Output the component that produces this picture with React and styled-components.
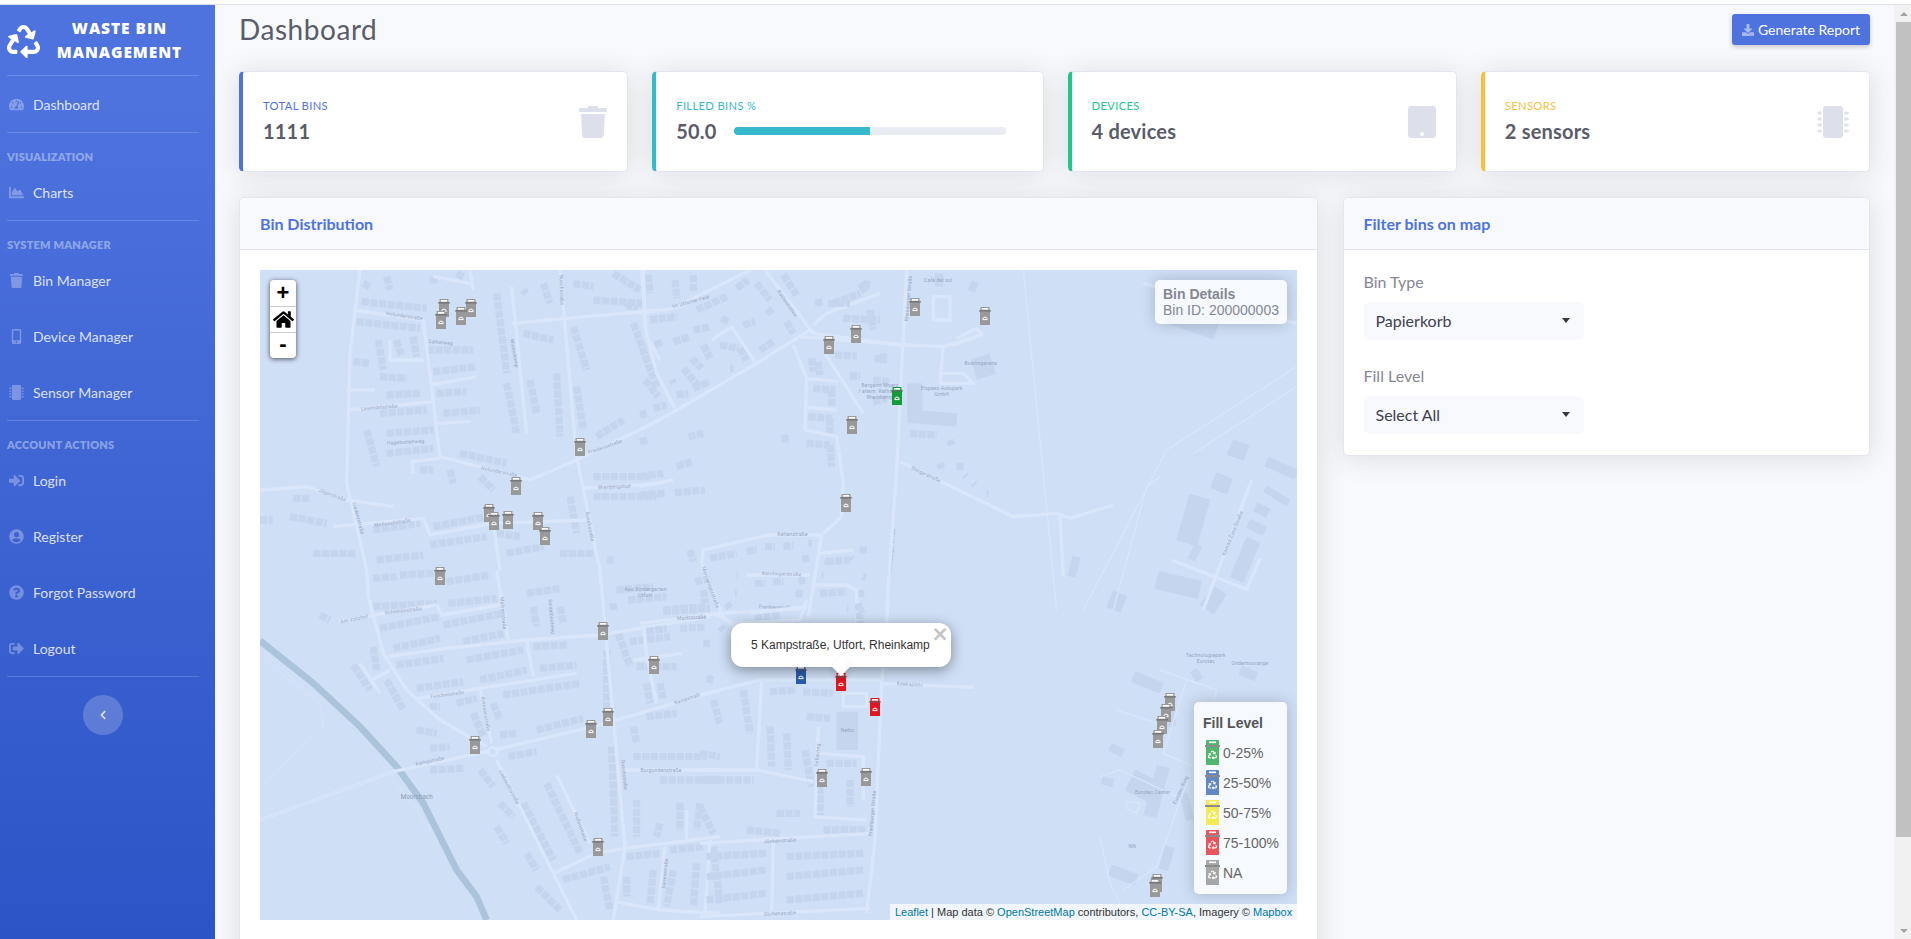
import React from 'react';
import styled, { createGlobalStyle } from 'styled-components';
import {
  FaRecycle, FaTachometerAlt, FaChartArea, FaTrash, FaMobileAlt, FaMicrochip, FaSignInAlt,
  FaUserCircle, FaQuestionCircle, FaSignOutAlt, FaChevronLeft, FaDownload, FaTablet, FaHome,
} from 'react-icons/fa';

const UI = '"Lato", "Open Sans", sans-serif';
const ARIAL = '"Liberation Sans", Arial, sans-serif';

const Global = createGlobalStyle`
  html, body { margin: 0; padding: 0; height: 100%; overflow: hidden; background: #fff; }
  * { box-sizing: border-box; }
  body { font-family: ${UI}; }
`;

const Page = styled.div`
  width: 1911px; height: 939px; display: flex; flex-direction: column; overflow: hidden; background: #fff;
`;
const TopStrip = styled.div`height: 5px; flex: none; background: #fff; border-bottom: 1px solid #dfe1e8;`;
const Body = styled.div`flex: 1; display: flex; min-height: 0;`;

const Sidebar = styled.aside`
  width: 215px; flex: none; height: 100%; display: flex; flex-direction: column;
  background: linear-gradient(180deg, #4e73df 10%, #224abe 130%);
`;
const Brand = styled.div`
  height: 70px; flex: none; display: flex; align-items: center; padding: 0 0 0 7px; color: #fff;
  svg { width: 33px; height: 33px; flex: none; margin-top: 2px; }
`;
const BrandText = styled.div`
  flex: 1; text-align: center; font-family: "Open Sans", sans-serif; font-weight: 800; font-size: 15.5px;
  line-height: 24px; letter-spacing: 0.95px; text-transform: uppercase; padding-right: 16px;
`;
const Divider = styled.hr`
  height: 1px; flex: none; margin: 0 16px 0 7px; border: 0; background: rgba(255,255,255,.17);
`;
const Heading = styled.div`
  height: 31px; flex: none; padding: 16px 0 0 7px; font-size: 11px; line-height: 15px; font-weight: 800; letter-spacing: .2px;
  text-transform: uppercase; color: rgba(255,255,255,.4); font-family: ${UI};
`;
const NavItem = styled.a`
  height: ${p => p.$h || 56}px; flex: none; display: flex; align-items: center; padding-left: 8px; color: rgba(255,255,255,.82);
  font-size: 14px;
`;
const NavIcon = styled.span`
  width: 25px; flex: none; display: flex; justify-content: center; padding-right: 9px; color: rgba(255,255,255,.3);
  svg { width: 15px; height: 15px; }
`;
const ToggleWrap = styled.div`display: flex; justify-content: center; padding: 18px 9px 0 0;`;
const Toggle = styled.button`
  width: 40px; height: 40px; border-radius: 50%; border: 0; background: rgba(255,255,255,.2); color: rgba(255,255,255,.8);
  display: flex; align-items: center; justify-content: center; padding: 0;
  svg { width: 10px; height: 10px; }
`;

const Main = styled.main`
  flex: 1; min-width: 0; background: #f8f9fc; padding: 9px 24px 0; overflow: hidden;
`;
const HeaderRow = styled.div`
  display: flex; justify-content: space-between; align-items: flex-start; height: 31px; margin-bottom: 26px;
`;
const Title = styled.h1`
  margin: 0; font-size: 28px; line-height: 31px; font-weight: 400; color: #5a5c69; font-family: ${UI}; letter-spacing: .55px;
`;
const ReportButton = styled.button`
  width: 138px; height: 31px; border: 0; border-radius: 3px; background: #4e73df; color: #fff; font-family: ${UI}; font-size: 14px;
  display: flex; align-items: center; justify-content: center; gap: 4px; padding: 0; box-shadow: 0 2px 4px rgba(58,59,69,.25);
  svg { width: 12px; height: 12px; color: rgba(255,255,255,.5); }
`;
const KpiRow = styled.section`
  display: grid; grid-template-columns: repeat(4, 1fr); gap: 24px; margin-bottom: 25px;
`;
const Kpi = styled.article`
  height: 101px; display: flex; align-items: center; justify-content: space-between; background: #fff; border-radius: 5px;
  border: 1px solid #e3e6f0; border-left: 4px solid ${p => p.$accent};
  box-shadow: 0 2px 28px rgba(58,59,69,.15); padding: 0 20px 0 20px;
`;
const KpiBody = styled.div`flex: 1; min-width: 0; margin-top: -2px;`;
const KpiLabel = styled.div`
  font-size: 11.2px; line-height: 14px; font-weight: 400; letter-spacing: .35px; text-transform: uppercase; color: ${p => p.$accent}; margin-bottom: 6px;
`;
const KpiValue = styled.div`
  font-size: 20px; line-height: 24px; font-weight: 700; color: #5a5c69; flex: none; letter-spacing: .2px;
`;
const KpiProgressRow = styled.div`display: flex; align-items: center; gap: 17px; padding-right: 17px;`;
const Progress = styled.div`
  flex: none; width: 272px; height: 8px; border-radius: 4px; background: #eaecf4; overflow: hidden;
`;
const ProgressFill = styled.div`width: ${p => p.$pct}%; height: 100%; background: #36b9cc;`;
const KpiIcon = styled.span`
  display: flex; color: #dddfeb; flex: none;
  svg { height: 32px; width: ${p => p.$w || 28}px; }
`;

const Columns = styled.section`
  display: grid; grid-template-columns: 1078.5px 527.5px; gap: 25px; align-items: start;
`;
const Panel = styled.article`
  background: #fff; border: 1px solid #e3e6f0; border-radius: 5px; box-shadow: 0 2px 28px rgba(58,59,69,.15);
  overflow: hidden; min-height: ${p => p.$min || 0}px;
`;
const PanelHeader = styled.header`
  height: 52px; background: #f8f9fc; border-bottom: 1px solid #e3e6f0; display: flex; align-items: center; padding: 0 20px 1px;
  font-size: 16px; font-weight: 700; color: #4e73df;
`;
const MapBody = styled.div`padding: 20px;`;
const FilterBody = styled.div`padding: 20px 20px 21px; display: flex; flex-direction: column; gap: 24px;`;
const Field = styled.label`display: flex; flex-direction: column; gap: 8px; align-items: flex-start;`;
const FieldLabel = styled.span`font-size: 16px; line-height: 24px; color: #858796;`;
const SelectWrap = styled.span`
  position: relative; width: 220px; height: 38px; display: block;
  &::after { content: ''; position: absolute; right: 14px; top: 16px; border-left: 4.5px solid transparent; border-right: 4.5px solid transparent; border-top: 5px solid #343a40; }
`;
const Select = styled.select`
  appearance: none; width: 100%; height: 100%; border: 0; border-radius: 6px; background: #f8f9fc; color: #3f4150;
  font-family: ${UI}; font-size: 16px; padding: 0 12px 2px; outline: 0;
`;

const MapFrame = styled.div`
  position: relative; width: 1037px; height: 650px; overflow: hidden; background: #cfdff6; font-family: ${ARIAL};
`;
const MapCanvas = styled.svg`display: block; width: 1037px; height: 650px;`;
const TileGroup = styled.g`filter: blur(.35px);`;
const ZoomBox = styled.div`
  position: absolute; left: 10px; top: 10px; width: 26px; background: #fff; border-radius: 4px; box-shadow: 0 1px 5px rgba(0,0,0,.65);
  display: flex; flex-direction: column;
`;
const ZoomButton = styled.a`
  height: 26px; display: flex; align-items: center; justify-content: center; color: #000; font: bold 22px "Liberation Sans", sans-serif;
  padding-bottom: ${p => p.$lift || 0}px;
  & + & { border-top: 1px solid #ccc; }
  svg { width: 21px; height: 21px; }
`;
const InfoBox = styled.div`
  position: absolute; right: 10px; top: 10px; width: 132px; height: 44px; padding: 6px 8px; background: rgba(255,255,255,.8);
  border-radius: 5px; box-shadow: 0 0 15px rgba(0,0,0,.2); color: #858796; font-size: 14px; line-height: 16px; white-space: nowrap;
`;
const InfoTitle = styled.div`font-weight: 700;`;
const Legend = styled.div`
  position: absolute; right: 10px; top: 432px; width: 93px; height: 192px; padding: 12px 0 0 11px; background: rgba(255,255,255,.8);
  border-radius: 5px; box-shadow: 0 0 15px rgba(0,0,0,.2); color: #555; font-size: 14px;
`;
const LegendTitle = styled.div`font-weight: 700; line-height: 18px; margin: 0 0 5.5px -2px;`;
const LegendRow = styled.div`height: 30px; display: flex; align-items: center; gap: 3px; white-space: nowrap; color: #666;`;
const Attribution = styled.div`
  position: absolute; right: 0; bottom: 0; height: 16px; width: 407px; padding: 0 5px; background: rgba(255,255,255,.7);
  color: #333; font-size: 11px; line-height: 16px; text-align: right; white-space: nowrap;
  a { color: #0078a8; }
`;
const Popup = styled.div`
  position: absolute; left: 471px; top: 353px; width: 220px; height: 44px; background: #fff; border-radius: 12px;
  box-shadow: 0 3px 14px rgba(0,0,0,.4); color: #333; font-size: 12px; line-height: 44px; padding-left: 20px; white-space: nowrap;
  &::after { content: ''; position: absolute; left: 103px; top: 36px; width: 14px; height: 14px; background: #fff; transform: rotate(45deg); box-shadow: 3px 3px 6px rgba(0,0,0,.12); }
`;
const PopupClose = styled.span`
  position: absolute; right: 2px; top: 4px; width: 18px; height: 14px; font: bold 21px/14px "DejaVu Sans", sans-serif; color: #c3c3c3; text-align: center;
`;

const Scrollbar = styled.div`
  width: 17px; flex: none; background: #f1f1f1; position: relative; display: flex; flex-direction: column; align-items: flex-end;
`;
const ScrollArrow = styled.div`
  height: 17px; width: 15px; flex: none; display: flex; align-items: center; justify-content: center;
  &::before { content: ''; border-left: 4px solid transparent; border-right: 4px solid transparent; ${p => p.$down ? 'border-top' : 'border-bottom'}: 4px solid #a3a3a3; }
`;
const ScrollThumb = styled.div`width: 15px; height: 815px; flex: none; background: #c1c1c1;`;
const ScrollGap = styled.div`flex: 1;`;

/* ---- map data: every layer is traced in the coordinates of a 3x crop ---- */
const layers = [
  { ox: 260, oy: 270,
    rows: [[305,95,500,115],[290,155,480,175],[280,275,330,280],[355,210,370,300],[460,200,470,260],[410,210,425,260],[360,320,440,325],[500,240,640,240],[520,305,650,290],[530,370,620,365],[380,375,480,370],[550,430,660,420],[360,430,500,420],[320,480,350,590],[380,490,520,480],[380,550,520,535],[600,550,740,580],[480,600,520,600],[570,600,580,640],[660,620,700,660],[710,70,740,310],[740,340,770,490],[790,190,880,210],[810,330,830,430],[890,310,900,500],[940,170,980,300],[950,350,970,480],[1000,90,1150,100],[1060,10,1140,60],[1120,160,1190,350],[1010,500,1090,450],[1000,620,1170,620],[1000,680,1190,680],[520,770,680,740],[340,780,480,760],[510,825,680,800],[350,870,490,855],[160,850,290,850],[100,685,150,685],[0,750,40,750],[90,740,200,760],[710,790,780,800],[740,850,850,830],[900,850,1000,850],[930,680,950,790],[1040,870,1060,870],[310,40,330,50],[380,20,390,60],[520,20,520,40],[590,10,610,20],[850,40,870,100],[790,60,800,70],[940,40,1000,50],[1100,100,1130,120]],
    roads: ['M300 0L270 250L260 640L320 900','M280 120L490 150','M490 150L540 560L810 630L950 570L1200 450','M900 0L950 560L1020 900','M755 160L1200 120','M755 50L800 490','M265 420L520 395','M530 460L630 455','M515 345L650 320','M260 360L345 360','M390 210L390 270L490 270','M460 610L455 575L540 565','M0 660L140 650L260 690L400 710','M220 770L490 745L510 795L700 760L980 750','M975 655L1200 640','M630 0L640 60','M520 20L630 40','M700 760L720 900','M1145 0L1160 200L1200 270'],
    labels: [['Holunderstraße',433,138,8],['Salbeiweg',542,217,5],['Lavendelstraße',358,412,-5],['Hagebuttenweg',437,516,-3],['Jägerstraße',217,675,20],['Liedentstraße',295,745,75],['Melissenstraße',398,758,-8],['Holunderstraße',718,605,12],['Friedensstraße',1035,530,-20],['Wienbergshof',1063,650,-2],['Buschstraße',905,60,88],['Buschstraße',990,770,80],['Wieleskamp',763,250,80]] },
  { ox: 260, oy: 570,
    rows: [[340,25,410,20],[420,15,520,10],[560,35,690,15],[340,110,530,100],[565,100,710,85],[360,175,540,140],[550,165,730,130],[400,235,540,205],[610,215,730,190],[410,285,550,265],[620,270,790,240],[470,355,610,335],[660,330,800,300],[730,375,960,340],[590,400,650,385],[510,410,540,410],[640,430,670,500],[700,400,720,450],[720,495,770,490],[830,480,970,445],[745,560,830,545],[510,600,610,595],[790,700,880,870],[860,640,960,850],[800,850,830,900],[820,230,920,225],[840,295,950,285],[800,70,900,55],[820,110,830,170],[900,110,910,160],[1060,100,1060,120],[1040,240,1040,420],[1055,530,1065,800],[1075,190,1110,290],[1110,215,1230,200],[1130,290,1250,290],[1160,340,1170,400],[1200,340,1210,385],[1120,470,1130,520],[1160,440,1250,430],[1120,560,1340,560],[1200,630,1380,630],[1260,700,1260,780],[1320,700,1310,780],[1200,760,1190,800],[1130,690,1130,800],[1100,860,1200,850],[1230,840,1330,830],[1100,920,1100,980],[1180,900,1170,1000],[1240,900,1220,1010],[1310,880,1300,1010],[1360,830,1380,1000],[910,930,1050,890],[1030,920,1050,1020],[830,950,900,1020],[1210,120,1340,110],[1070,60,1180,50],[1105,90,1220,80],[180,135,210,150],[340,230,350,300],[280,285,330,360],[380,330,430,420],[470,480,530,490],[510,535,570,530],[660,600,700,650],[710,770,740,820],[720,700,760,740]],
    roads: ['M320 0L325 80L370 250L440 360L540 450L680 530','M240 155L370 130L530 105','M530 105L545 135L720 105','M385 260L560 235L800 210L1020 195L1350 140','M800 210L820 320','M470 385L660 355L950 310','M660 355L695 520','M0 750L400 605L680 545L1000 470L1380 360','M710 570L780 710L950 1050','M1020 0L1095 830L1060 1050','M1095 600L1380 600','M880 910L1010 850L1095 835L1380 800','M1065 995L1200 1020L1380 1030','M1350 810L1335 1030','M1215 830L1195 1020','M890 615L990 820','M1150 165L1160 260L1190 400','M1120 270L1265 250','M710 0L745 210','M300 280L360 370','M335 330L390 300','M1280 720L1280 810'],
    labels: [['Am Votzhof',283,147,-12],['Schlehenstraße',430,122,-7],['Malvenstraße',730,130,85],['Seidelbastweg',875,140,85],['Fenchelstraße',562,373,-8],['Kressenstraße',677,432,80],['Kampstraße',510,573,-12],['Kampstraße',1285,385,-18],['Liebrechtstraße',748,652,62],['Wellenstraße',962,770,70],['Buschstraße',1093,615,85],['Burgundenstraße',1203,600,0],['Marktstraße',1295,143,-4],['Skirenstraße',1215,910,-85],['Awo Kindergarten',1156,58,0],['Utfort',1156,75,0]] },
  { ox: 640, oy: 270,
    rows: [[25,15,30,70],[105,30,110,85],[160,15,160,65],[30,150,110,140],[45,225,70,215],[100,215,150,200],[160,180,210,170],[190,225,210,265],[155,265,185,295],[240,225,295,235],[245,145,265,155],[170,120,260,80],[290,55,325,30],[350,40,390,90],[380,130,400,115],[440,155,460,190],[310,165,345,155],[360,240,400,215],[300,235,320,270],[270,295,280,295],[130,295,180,355],[110,375,145,370],[160,355,210,335],[40,415,80,405],[0,435,20,430],[95,330,100,340],[15,330,55,380],[145,500,190,490],[0,515,25,510],[110,590,155,575],[0,620,70,610],[0,675,75,670],[105,668,195,660],[435,495,435,520],[520,355,585,360],[575,360,575,410],[505,440,575,445],[570,445,570,490],[500,520,570,525],[570,525,575,590],[515,265,520,305],[535,275,540,315],[585,255,650,258],[705,265,735,268],[630,318,660,318],[700,330,750,335],[700,395,740,385],[610,145,720,150],[690,120,700,180],[580,100,660,70],[430,15,470,75],[670,40,695,45],[525,100,550,95],[210,865,290,850],[320,845,350,840],[375,830,405,830],[430,828,460,828],[505,820,515,820],[495,855,500,880],[150,840,160,875],[165,935,215,925],[290,915,295,915],[345,940,375,940],[400,935,430,935],[475,935,495,930],[545,915,550,915],[285,970,290,970],[480,960,475,985],[190,960,195,1000],[70,1025,210,1015],[260,1000,270,1015],[20,1085,80,1075],[120,1075,195,1072],[345,1045,420,1035],[560,875,630,870],[670,830,670,850],[670,920,675,920],[540,970,620,965],[660,960,665,985],[620,1015,625,1015],[660,1015,665,1030]],
    roads: ['M0 130L100 115L330 0','M10 0L15 170L50 310L105 415','M0 480L110 420L350 280L510 180','M375 0L520 190L780 225','M520 165L560 130L720 70','M215 210L275 170L345 275','M460 225L500 325L495 480L590 500L610 640L605 740L550 790','M500 325L595 335','M500 412L590 420','M555 250L670 430','M185 880L190 840L385 795L545 795L505 1040','M320 915L510 915','M540 850L640 840','M515 945L620 945L650 960L650 1060','M0 1060L240 1030L280 1070','M240 1030L500 1015','M0 650L100 630','M185 880L245 1030'],
    labels: [['Im Utforter Feld',152,95,-15],['Rathausallee',442,100,55],['Keltenstraße',458,792,0],['Karolingerstraße',425,912,2],['Merowingerstraße',212,952,70],['Frankenstraße',408,1012,2],['Marktstraße',155,1042,-4],['Rheinberger Straße',755,843,-85]] },
  { ox: 800, oy: 270,
    rows: [[200,45,180,60,30],[85,100,150,100],[240,265,240,265,30],[345,340,345,460,45],[345,440,470,450,40],[330,490,410,495],[450,510,455,525],[420,580,425,595],[470,590,470,590],[495,615,500,620],[520,640,525,645],[560,670,565,670],[75,870,85,875],[115,875,120,875],[150,865,155,870],[190,840,190,850],[190,920,195,925],[405,30,430,30,40],[510,45,530,55,30],[540,260,560,320,60],[1105,130,1250,180,60],[1290,530,1340,550,50],[1240,630,1290,650,50],[1400,575,1490,615,30],[1200,680,1160,820,65],[1395,655,1465,700,22],[1365,710,1405,730,30],[1345,760,1395,785,30],[1360,810,1310,930,45],[1195,825,1175,870,25],[1070,930,1200,960,55],[830,860,815,920,25],[960,970,940,1020,45],[1260,960,1220,1020,50]],
    roads: ['M320 0L290 600L260 1020','M0 200L320 225L430 230L540 195','M300 575L640 740L770 730L810 745L940 705','M780 740L790 920','M1030 40L1490 160','M1355 630L1210 1020','M1115 870L1345 960','M1380 865L1340 960','M400 80L450 80L450 150L400 150Z','M430 230L420 340L520 340L490 310L420 310','M460 225L545 195L530 175L470 205'],
    faint: ['M670 0L770 1020','M1490 290L1100 540L850 1020','M1490 350L1180 550','M1080 620L1040 650L940 1020'],
    labels: [['Café del sol',415,32,0],['Bowlingarena',542,279,0],['Bergamt Moers',240,346,0],['/ ehem. Rathaus',235,364,0],['Rheinkamp',240,382,0],['Elspass Autopark',425,355,0],['GmbH',425,373,0],['Steigerstraße',378,613,25],['Rheinberger Straße',325,85,-85],['Konrad-Zuse-Straße',1297,790,-68],['Technologiepark',1218,1156,0],['Eurotec',1218,1174,0],['Ondernoorange',1350,1179,0]] },
  { ox: 700, oy: 600,
    rows: [[210,275,290,270],[310,275,400,280],[442,335,442,450,65],[130,270,150,400],[210,380,215,500],[260,400,265,510],[320,350,390,355],[315,450,335,560],[0,540,160,540],[380,490,470,490],[0,460,60,470],[40,300,60,370],[230,640,300,640],[360,560,360,650],[450,540,450,620],[370,690,500,690],[0,620,40,700],[140,690,240,700],[20,770,200,760],[20,830,200,810],[260,770,490,760],[260,830,490,810],[20,900,200,880],[260,900,490,880],[475,10,480,70],[60,80,70,90],[10,130,30,130],[20,235,40,240]],
    roads: ['M565 0L545 250L525 720L500 939','M540 250L820 262','M0 285L180 240L540 240','M185 240L170 510L0 510','M170 510L340 545','M355 380L345 650L500 660','M360 460L490 470L490 600','M430 280L500 280L500 320L430 320Z','M0 730L515 700','M0 950L510 925','M220 720L215 950','M320 0L300 60L100 70L40 40','M150 40L320 20'],
    labels: [['Netto',442,390,0],['Edekaplatz',630,253,3],['Rheinberger Straße',517,640,-85],['Gellerring',352,465,-85],['Jückenstraße',240,722,-3],['Stubenstraße',240,940,-3]] },
  { ox: 1100, oy: 670,
    rows: [[100,20,185,55,35],[90,330,170,370,70],[190,290,150,440,40],[30,230,70,250,25],[5,330,40,340,25],[250,370,270,450,25],[210,530,190,600,30],[30,600,110,630,35],[280,0,300,30,25],[200,100,215,170,30],[420,0,470,20,30]],
    roads: [],
    faint: ['M180 0L350 60L300 260','M50 120L200 170','M260 30L190 250L280 290','M0 320L60 300L230 380','M270 310L170 590L70 660','M0 500L30 640L60 700','M80 395L120 400L110 430L80 415Z'],
    labels: [['Eurotec Center',158,368,0],['Eurotec-Ring',242,360,-65],['NN',97,528,0]] },
];

const markers = [
  [444,308],[471,308],[461,316],[441,320],[580,447],[516,486],[489,513],[494,521],[508,520],[538,521],[545,536],[440,576],
  [915,307],[985,316],[856,334],[829,345],[852,425],[846,503],[603,631],[654,665],[608,717],[591,729],[475,745],[598,847],
  [822,778],[866,777],[1170,702],[1166,713],[1162,725],[1158,739],[1157,883],[1155,888],
  [897,396,'#169b3b'],[801,675,'#2b5ba8'],[841,682,'#e3161f'],[875,707,'#e3161f'],
];

const Bin = ({ x, y, color = '#999' }) => (
  <g transform={`translate(${x - 6} ${y - 9})`}>
    <rect x="1" y="3" width="10" height="15" fill={color} />
    <rect x="1.5" y="0" width="9" height="3.5" fill={color} />
    <rect x="2.8" y="1" width="6.4" height="1.7" fill="#fff" />
    <rect x="0" y="3.4" width="12" height="1" fill="#666" />
    <path d="M3.6 12.6h4.8M3.8 12.3a2.2 2.2 0 0 1 4.4 0" stroke="#fff" strokeWidth="1" fill="none" />
  </g>
);

const MapLayer = ({ ox, oy, rows, roads, faint = [], labels }) => (
  <g transform={`translate(${ox} ${oy}) scale(.3333)`}>
    <TileGroup>
      {rows.map(([a, b, c, d, w], i) => (
        <line key={i} x1={a} y1={b} x2={c === a && d === b ? c + 20 : c} y2={d} stroke="#c4d5ed" strokeWidth={w || 22}
          strokeDasharray={w ? undefined : '22 4'} />
      ))}
      {faint.map((d, i) => <path key={i} d={d} fill="none" stroke="#d9e6f9" strokeWidth="4" />)}
      {roads.map((d, i) => <path key={i} d={d} fill="none" stroke="#dae7fa" strokeWidth="10" strokeLinejoin="round" />)}
    </TileGroup>
    {labels.map(([t, x, y, r], i) => (
      <text key={i} x={x} y={y + 5} transform={`rotate(${r} ${x} ${y})`} textAnchor="middle" fontSize="15" letterSpacing=".6"
        fontFamily='"Roboto", sans-serif' fill="#95a5c2">{t}</text>
    ))}
  </g>
);

const LegendBin = ({ color }) => (
  <svg width="15" height="25" viewBox="0 0 15 25">
    <rect x="1" y="0" width="13" height="6" rx="1" fill={color} />
    <rect x="4" y="1.5" width="7" height="1.6" fill="#fff" />
    <rect x="1" y="6" width="13" height="19" fill={color} />
    <rect x="0" y="5" width="15" height="2" fill="#8b8b8b" />
    <FaRecycle x="3" y="10.5" size="9" color="#fff" />
  </svg>
);

const legend = [['0-25%', '#52b56d'], ['25-50%', '#6287c3'], ['50-75%', '#f4ea56'], ['75-100%', '#ea545c'], ['NA', '#a6a6a6']];

const BinMap = () => (
  <MapFrame>
    <MapCanvas viewBox="260 270 1037 650" xmlns="http://www.w3.org/2000/svg">
      <rect x="260" y="270" width="1037" height="650" fill="#cfdff6" />
      <g transform="translate(260 570) scale(.3333)">
        <path d="M0 235L180 400L190 470L0 650M350 560L600 900M0 255L170 400" fill="none" stroke="#d7e4f8" strokeWidth="3" />
        <path d="M0 212L160 340L300 470L410 590L490 700L590 900L650 980L680 1050" fill="none" stroke="#abc4dc" strokeWidth="20" />
      </g>
      {layers.map((l, i) => <MapLayer key={i} {...l} />)}
      <g transform="translate(260 570) scale(.3333)">
        <path d="M0 750L400 605" fill="none" stroke="#cfdff6" strokeWidth="3" />
        <circle cx="698" cy="545" r="13" fill="#cfdff6" stroke="#dae7fa" strokeWidth="8" />
        <text x="470" y="686" textAnchor="middle" fontSize="19" fontFamily='"Roboto", sans-serif' fill="#8e9ebb">Moorsbach</text>
      </g>
      {markers.map(([x, y, c], i) => <Bin key={i} x={x} y={y} color={c} />)}
    </MapCanvas>
    <ZoomBox>
      <ZoomButton>+</ZoomButton>
      <ZoomButton><FaHome /></ZoomButton>
      <ZoomButton $lift={3}>-</ZoomButton>
    </ZoomBox>
    <InfoBox>
      <InfoTitle>Bin Details</InfoTitle>
      Bin ID: 200000003
    </InfoBox>
    <Popup>
      5 Kampstraße, Utfort, Rheinkamp
      <PopupClose>×</PopupClose>
    </Popup>
    <Legend>
      <LegendTitle>Fill Level</LegendTitle>
      {legend.map(([t, c]) => (
        <LegendRow key={t}><LegendBin color={c} />{t}</LegendRow>
      ))}
    </Legend>
    <Attribution>
      <a>Leaflet</a> | Map data © <a>OpenStreetMap</a> contributors, <a>CC-BY-SA</a>, Imagery © <a>Mapbox</a>
    </Attribution>
  </MapFrame>
);

const Nav = ({ icon: Icon, h, children }) => (
  <NavItem $h={h}><NavIcon><Icon /></NavIcon>{children}</NavItem>
);

export default function App() {
  return (
    <Page>
      <Global />
      <TopStrip />
      <Body>
        <Sidebar>
          <Brand>
            <FaRecycle />
            <BrandText>Waste Bin<br />Management</BrandText>
          </Brand>
          <Divider />
          <Nav icon={FaTachometerAlt}>Dashboard</Nav>
          <Divider />
          <Heading>Visualization</Heading>
          <Nav icon={FaChartArea}>Charts</Nav>
          <Divider />
          <Heading>System Manager</Heading>
          <Nav icon={FaTrash}>Bin Manager</Nav>
          <Nav icon={FaMobileAlt}>Device Manager</Nav>
          <Nav icon={FaMicrochip}>Sensor Manager</Nav>
          <Divider />
          <Heading>Account Actions</Heading>
          <Nav icon={FaSignInAlt}>Login</Nav>
          <Nav icon={FaUserCircle}>Register</Nav>
          <Nav icon={FaQuestionCircle}>Forgot Password</Nav>
          <Nav icon={FaSignOutAlt}>Logout</Nav>
          <Divider />
          <ToggleWrap><Toggle><FaChevronLeft /></Toggle></ToggleWrap>
        </Sidebar>
        <Main>
          <HeaderRow>
            <Title>Dashboard</Title>
            <ReportButton><FaDownload />Generate Report</ReportButton>
          </HeaderRow>
          <KpiRow>
            <Kpi $accent="#4e73df">
              <KpiBody>
                <KpiLabel $accent="#4e73df">Total Bins</KpiLabel>
                <KpiValue>1111</KpiValue>
              </KpiBody>
              <KpiIcon><FaTrash /></KpiIcon>
            </Kpi>
            <Kpi $accent="#36b9cc">
              <KpiBody>
                <KpiLabel $accent="#36b9cc">Filled Bins %</KpiLabel>
                <KpiProgressRow>
                  <KpiValue>50.0</KpiValue>
                  <Progress><ProgressFill $pct={50} /></Progress>
                </KpiProgressRow>
              </KpiBody>
            </Kpi>
            <Kpi $accent="#1cc88a">
              <KpiBody>
                <KpiLabel $accent="#1cc88a">Devices</KpiLabel>
                <KpiValue>4 devices</KpiValue>
              </KpiBody>
              <KpiIcon><FaTablet /></KpiIcon>
            </Kpi>
            <Kpi $accent="#f6c23e">
              <KpiBody>
                <KpiLabel $accent="#f6c23e">Sensors</KpiLabel>
                <KpiValue>2 sensors</KpiValue>
              </KpiBody>
              <KpiIcon $w={32}><FaMicrochip /></KpiIcon>
            </Kpi>
          </KpiRow>
          <Columns>
            <Panel $min={800}>
              <PanelHeader>Bin Distribution</PanelHeader>
              <MapBody><BinMap /></MapBody>
            </Panel>
            <Panel>
              <PanelHeader>Filter bins on map</PanelHeader>
              <FilterBody>
                <Field>
                  <FieldLabel>Bin Type</FieldLabel>
                  <SelectWrap>
                    <Select defaultValue="Papierkorb"><option>Papierkorb</option></Select>
                  </SelectWrap>
                </Field>
                <Field>
                  <FieldLabel>Fill Level</FieldLabel>
                  <SelectWrap>
                    <Select defaultValue="Select All"><option>Select All</option></Select>
                  </SelectWrap>
                </Field>
              </FilterBody>
            </Panel>
          </Columns>
        </Main>
        <Scrollbar>
          <ScrollArrow />
          <ScrollThumb />
          <ScrollGap />
          <ScrollArrow $down />
        </Scrollbar>
      </Body>
    </Page>
  );
}
